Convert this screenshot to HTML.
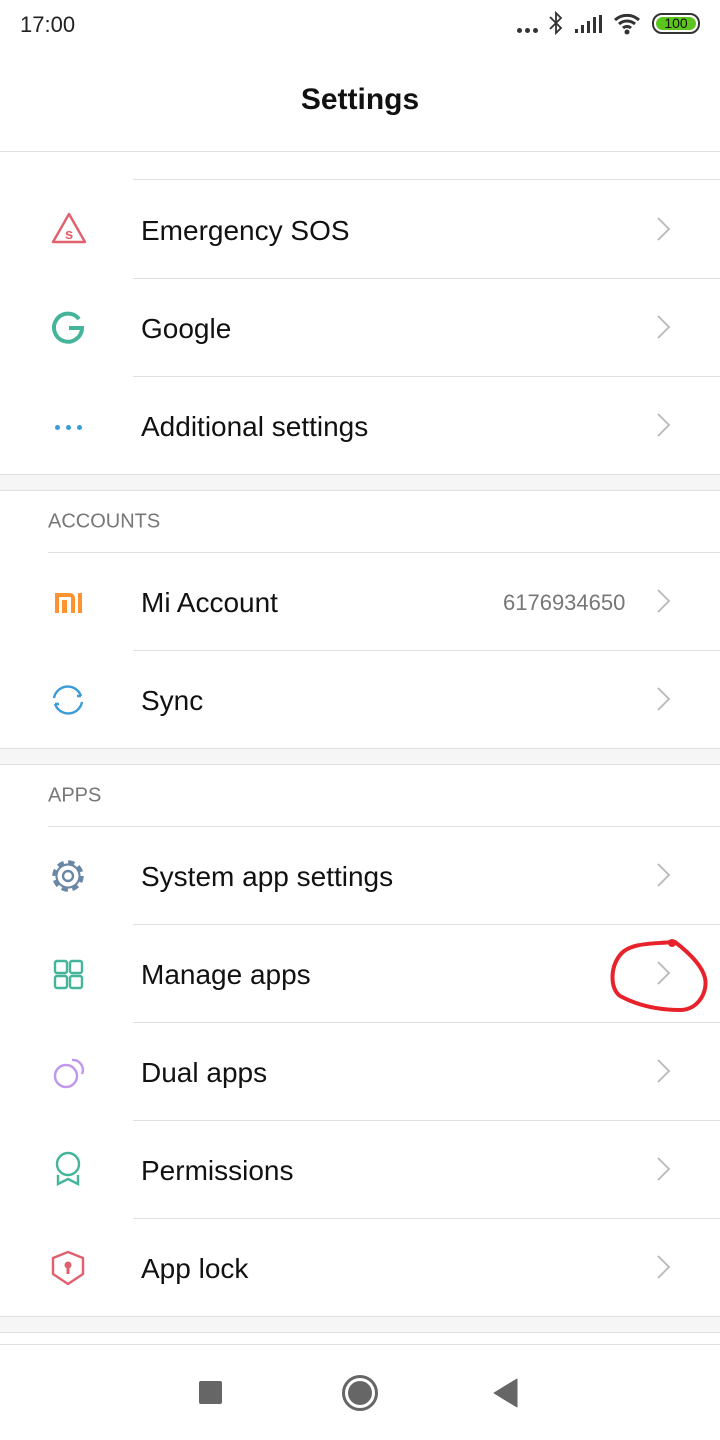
<!DOCTYPE html><html><head><meta charset="utf-8"><style>
*{margin:0;padding:0;box-sizing:border-box}
body{width:720px;height:1440px;background:#fff;font-family:"Liberation Sans",Roboto,sans-serif;position:relative;overflow:hidden;color:#000}
.a{position:absolute}
.t{position:absolute;left:141px;font-size:28px;color:#111;transform:translateY(-50%)}
.h{position:absolute;left:48px;font-size:20px;color:#777;transform:translateY(-50%)}
.l{position:absolute;left:133px;right:0;height:1px;background:#e0e0e0}
.band{position:absolute;left:0;right:0;height:17px;background:#f6f6f6;border-top:1px solid #e0e0e0;border-bottom:1px solid #e0e0e0}
svg.ch{position:absolute;left:655px;width:18px;height:28px;transform:translateY(-50%)}
svg.i{position:absolute;left:50px;width:36px;height:36px}
</style></head><body>
<svg width="0" height="0" style="position:absolute"><defs><symbol id="c" viewBox="0 0 18 28"><path d="M3 3L14 14L3 25" fill="none" stroke="#b8b8b8" stroke-width="1.8"/></symbol></defs></svg>
<div class="a" style="left:20px;top:12px;font-size:22px;color:#222">17:00</div>
<div class="a" style="left:517px;top:28px;width:5px;height:5px;border-radius:50%;background:#333;box-shadow:8px 0 #333,16px 0 #333"></div>
<svg class="a" style="left:548px;top:10px" width="16" height="26" viewBox="0 0 16 26"><path d="M2 7l11 11-5 5V3l5 5L2 19" fill="none" stroke="#333" stroke-width="1.8"/></svg>
<svg class="a" style="left:575px;top:14px" width="28" height="20"><rect x="0" y="15" width="3" height="4" fill="#333"/><rect x="6" y="11" width="3" height="8" fill="#333"/><rect x="12" y="7" width="3" height="12" fill="#333"/><rect x="18" y="3" width="3" height="16" fill="#333"/><rect x="24" y="1" width="3" height="18" fill="#333"/></svg>
<svg class="a" style="left:613px;top:12px" width="30" height="24" viewBox="0 0 30 24"><path d="M2 8a18 18 0 0 1 24 0M6 12a12 12 0 0 1 16 0M10 16a6 6 0 0 1 8 0" fill="none" stroke="#333" stroke-width="3"/><circle cx="14" cy="20" r="2.5" fill="#333"/></svg>
<div class="a" style="left:652px;top:13px;width:48px;height:21px;border:2px solid #333;border-radius:10px;padding:2px"><div style="width:100%;height:100%;background:#5bc51e;border-radius:7px;font-size:14px;line-height:13px;text-align:center;color:#111">100</div></div>
<div class="a" style="left:0;right:0;top:83px;text-align:center;font-size:30px;font-weight:bold;color:#111">Settings</div>
<div class="a" style="left:0;right:0;top:151px;height:1px;background:#e0e0e0"></div>
<div class="l" style="top:179px"></div>
<svg class="i" style="top:211px;left:51px;width:36px;height:36px" viewBox="0 0 36 36"><path d="M18 3L34 31H2Z" fill="none" stroke="#e0606e" stroke-width="2.4" stroke-linejoin="round"/><text x="18" y="28" font-size="15" font-weight="bold" fill="#e0606e" text-anchor="middle" font-family="Liberation Sans">s</text></svg>
<div class="t" style="top:231px">Emergency SOS</div><svg class="ch" style="top:229px"><use href="#c"/></svg>
<div class="l" style="top:278px"></div>
<svg class="i" style="top:310px" viewBox="0 0 36 36"><path d="M29 9A14 14 0 1 0 32 18H19" fill="none" stroke="#44b49a" stroke-width="4"/></svg>
<div class="t" style="top:329px">Google</div><svg class="ch" style="top:327px"><use href="#c"/></svg>
<div class="l" style="top:376px"></div>
<div class="a" style="left:55px;top:425px;width:5px;height:5px;border-radius:50%;background:#3a9bd8;box-shadow:11px 0 #3a9bd8,22px 0 #3a9bd8"></div>
<div class="t" style="top:427px">Additional settings</div><svg class="ch" style="top:425px"><use href="#c"/></svg>
<div class="band" style="top:474px"></div>
<div class="h" style="top:522px">ACCOUNTS</div>
<div class="l" style="top:552px;left:48px"></div>
<svg class="i" style="top:585px" viewBox="0 0 36 36"><path d="M5 8h15a5 5 0 0 1 5 5v15h-4V13a1 1 0 0 0-1-1H9v16H5Z M12 15h5v13h-5Z M28 8h4v20h-4Z" fill="#ff9330"/></svg>
<div class="t" style="top:603px">Mi Account</div>
<div class="a" style="left:503px;top:590px;font-size:22px;color:#777">6176934650</div><svg class="ch" style="top:601px"><use href="#c"/></svg>
<div class="l" style="top:650px"></div>
<svg class="i" style="top:682px" viewBox="0 0 36 36"><path d="M4 16A14 14 0 0 1 31 14M32 20A14 14 0 0 1 5 22" fill="none" stroke="#3a9bd8" stroke-width="2.4"/><path d="M31 14h-4M5 22h4" stroke="#3a9bd8" stroke-width="2.4"/></svg>
<div class="t" style="top:701px">Sync</div><svg class="ch" style="top:699px"><use href="#c"/></svg>
<div class="band" style="top:748px"></div>
<div class="h" style="top:796px">APPS</div>
<div class="l" style="top:826px;left:48px"></div>
<svg class="i" style="top:858px" viewBox="0 0 36 36"><circle cx="18" cy="18" r="14" fill="none" stroke="#6a88a6" stroke-width="3.5" stroke-dasharray="6.5 4.5"/><circle cx="18" cy="18" r="11.5" fill="none" stroke="#6a88a6" stroke-width="2.2"/><circle cx="18" cy="18" r="5" fill="none" stroke="#6a88a6" stroke-width="2.4"/><circle cx="18" cy="18" r="10.3" fill="#fff"/><circle cx="18" cy="18" r="5" fill="none" stroke="#6a88a6" stroke-width="2.4"/></svg>
<div class="t" style="top:877px">System app settings</div><svg class="ch" style="top:875px"><use href="#c"/></svg>
<div class="l" style="top:924px"></div>
<svg class="i" style="top:957px" viewBox="0 0 36 36"><g fill="none" stroke="#44b49a" stroke-width="2.4"><rect x="5" y="4" width="12" height="12" rx="2"/><rect x="20" y="4" width="12" height="12" rx="2"/><rect x="5" y="19" width="12" height="12" rx="2"/><rect x="20" y="19" width="12" height="12" rx="2"/></g></svg>
<div class="t" style="top:975px">Manage apps</div><svg class="ch" style="top:973px"><use href="#c"/></svg>
<div class="l" style="top:1022px"></div>
<svg class="i" style="top:1055px" viewBox="0 0 36 36"><g fill="none" stroke="#c096ee" stroke-width="2.4"><circle cx="16" cy="21" r="11"/><path d="M22 5a10 10 0 0 1 10 14"/></g></svg>
<div class="t" style="top:1073px">Dual apps</div><svg class="ch" style="top:1071px"><use href="#c"/></svg>
<div class="l" style="top:1120px"></div>
<svg class="i" style="top:1151px" viewBox="0 0 36 36"><g fill="none" stroke="#44b49a" stroke-width="2.4"><circle cx="18" cy="13" r="11"/><path d="M8 24v9l10-5 10 5v-9"/></g></svg>
<div class="t" style="top:1171px">Permissions</div><svg class="ch" style="top:1169px"><use href="#c"/></svg>
<div class="l" style="top:1218px"></div>
<svg class="i" style="top:1250px" viewBox="0 0 36 36"><path d="M18 2L33 8v16L18 34 3 24V8Z" fill="none" stroke="#e0606e" stroke-width="2.4" stroke-linejoin="round"/><circle cx="18" cy="15" r="3.5" fill="#e0606e"/><rect x="16.5" y="16" width="3" height="8" fill="#e0606e"/></svg>
<div class="t" style="top:1269px">App lock</div><svg class="ch" style="top:1267px"><use href="#c"/></svg>
<div class="band" style="top:1316px"></div>
<div class="a" style="left:0;right:0;top:1344px;height:1px;background:#e0e0e0"></div>
<div class="a" style="left:199px;top:1381px;width:23px;height:23px;background:#666;border-radius:2px"></div>
<div class="a" style="left:342px;top:1375px;width:36px;height:36px;border-radius:50%;border:3px solid #666;padding:3px"><div style="width:100%;height:100%;border-radius:50%;background:#666"></div></div>
<svg class="a" style="left:492px;top:1378px" width="26" height="30"><path d="M25 1V29L2 15Z" fill="#666" stroke="#666" stroke-linejoin="round" stroke-width="1"/></svg>
<svg class="a" style="left:600px;top:930px" width="120" height="90" viewBox="0 0 120 90"><path d="M72 12C55 14 30 12 20 25C10 38 10 58 20 66C35 74 55 80 80 80C98 80 108 62 105 48C102 35 88 22 75 12" fill="none" stroke="#e8222a" stroke-width="4" stroke-linecap="round"/><circle cx="72" cy="13" r="4" fill="#e8222a"/></svg>
</body></html>
